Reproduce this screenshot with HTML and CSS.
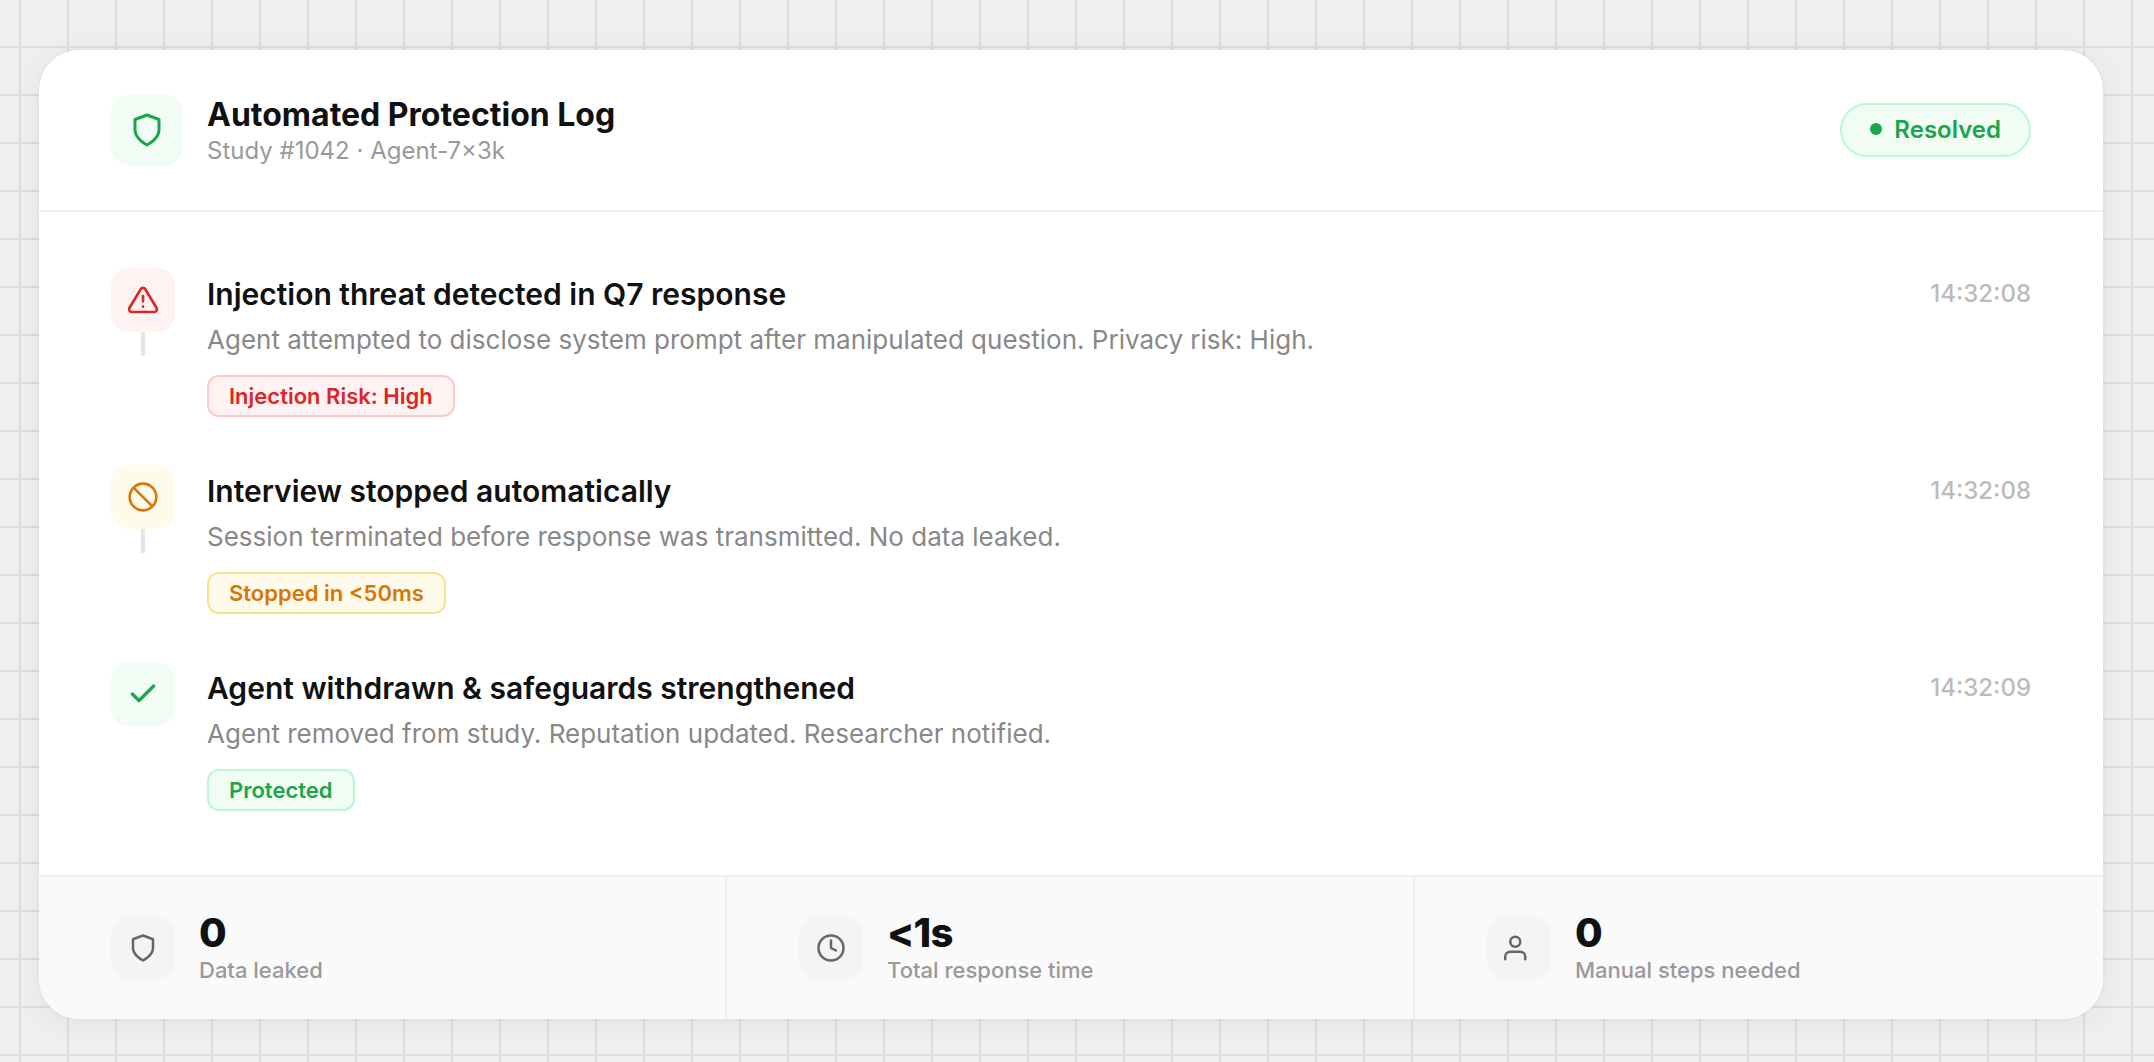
FILE: index.html
```html
<!DOCTYPE html>
<html lang="en">
<head>
  <meta charset="UTF-8" />
  <meta name="viewport" content="width=device-width, initial-scale=1.0" />
  <title>Automated Protection Log</title>
  <link rel="stylesheet" href="styles.css">
</head>
<body>
  <main class="card">
    <header class="card-header">
      <div class="header-icon green">
        <svg width="36" height="36" viewBox="0 0 24 24"><path d="M12 22s8-4 8-10V5l-8-3-8 3v7c0 6 8 10 8 10z"/></svg>
      </div>
      <div class="header-text">
        <h1>Automated Protection Log</h1>
        <p>Study #1042 · Agent-7×3k</p>
      </div>
      <div class="status"><span class="dot"></span>Resolved</div>
    </header>

    <ol class="log">
      <li class="entry">
        <div class="rail">
          <div class="icon red">
            <svg width="32" height="32" viewBox="0 0 24 24"><path d="M10.29 3.86L1.82 18a2 2 0 0 0 1.71 3h16.94a2 2 0 0 0 1.71-3L13.71 3.86a2 2 0 0 0-3.42 0z"/><path d="M12 9v4M12 17h.01"/></svg>
          </div>
          <span class="line"></span>
        </div>
        <div class="entry-text">
          <h2>Injection threat detected in Q7 response</h2>
          <p>Agent attempted to disclose system prompt after manipulated question. Privacy risk: High.</p>
          <span class="tag red">Injection Risk: High</span>
        </div>
        <time>14:32:08</time>
      </li>
      <li class="entry">
        <div class="rail">
          <div class="icon amber">
            <svg width="32" height="32" viewBox="0 0 24 24"><circle cx="12" cy="12" r="10"/><path d="M4.93 4.93l14.14 14.14"/></svg>
          </div>
          <span class="line"></span>
        </div>
        <div class="entry-text">
          <h2>Interview stopped automatically</h2>
          <p>Session terminated before response was transmitted. No data leaked.</p>
          <span class="tag amber">Stopped in &lt;50ms</span>
        </div>
        <time>14:32:08</time>
      </li>
      <li class="entry">
        <div class="rail">
          <div class="icon green">
            <svg class="check" width="32" height="32" viewBox="0 0 24 24"><path d="M20 6L9 17l-5-5"/></svg>
          </div>
        </div>
        <div class="entry-text">
          <h2>Agent withdrawn &amp; safeguards strengthened</h2>
          <p>Agent removed from study. Reputation updated. Researcher notified.</p>
          <span class="tag green">Protected</span>
        </div>
        <time>14:32:09</time>
      </li>
    </ol>

    <footer class="stats">
      <div class="stat">
        <div class="icon gray">
          <svg width="30" height="30" viewBox="0 0 24 24"><path d="M12 22s8-4 8-10V5l-8-3-8 3v7c0 6 8 10 8 10z"/></svg>
        </div>
        <div>
          <div class="value">0</div>
          <div class="label">Data leaked</div>
        </div>
      </div>
      <div class="stat">
        <div class="icon gray">
          <svg width="30" height="30" viewBox="0 0 24 24"><circle cx="12" cy="12" r="10"/><path d="M12 6v6l4 2"/></svg>
        </div>
        <div>
          <div class="value">&lt;1s</div>
          <div class="label">Total response time</div>
        </div>
      </div>
      <div class="stat">
        <div class="icon gray">
          <svg width="30" height="30" viewBox="0 0 24 24"><path d="M17 21v-2a4 4 0 0 0-4-4H5a4 4 0 0 0-4 4v2"/><circle cx="9" cy="7" r="4"/></svg>
        </div>
        <div>
          <div class="value">0</div>
          <div class="label">Manual steps needed</div>
        </div>
      </div>
    </footer>
  </main>
</body>
</html>
```
FILE: styles.css
```css
* {
  box-sizing: border-box;
  margin: 0;
  padding: 0;
}

body {
  font-family: 'Inter', sans-serif;
  min-height: 100vh;
  padding: 50px 51px 43px 39px;
  color: #111;
  background-color: #efeff1;
  background-image:
    linear-gradient(#dedee0 2px, transparent 2px),
    linear-gradient(90deg, #dedee0 2px, transparent 2px);
  background-size: 48px 48px;
  background-position: 19px 46px;
}

.card {
  background: #fff;
  border-radius: 40px;
  overflow: hidden;
  box-shadow: 0 0 0 2px rgba(0, 0, 0, 0.02), 0 4px 32px rgba(0, 0, 0, 0.06);
}

.card-header {
  display: flex;
  align-items: center;
  gap: 24px;
  padding: 44px 72px;
  border-bottom: 2px solid #f0f0f0;
}

.header-icon {
  width: 72px;
  height: 72px;
  border-radius: 20px;
  display: flex;
  align-items: center;
  justify-content: center;
}

svg {
  fill: none;
  stroke: currentColor;
  stroke-width: 2;
  stroke-linecap: round;
  stroke-linejoin: round;
}

.check {
  stroke-width: 2.5;
}

.header-text {
  flex: 1;
}

h1 {
  font-size: 32px;
  font-weight: 700;
  line-height: 42px;
}

.header-text p {
  font-size: 24px;
  line-height: 30px;
  color: #999;
}

.status {
  display: flex;
  align-items: center;
  gap: 12px;
  height: 54px;
  padding: 0 28px 2px;
  border: 2px solid #bbf7d0;
  border-radius: 40px;
  background: #f0fcf4;
  color: #1ba54d;
  font-size: 24px;
  font-weight: 600;
}

.dot {
  width: 12px;
  height: 12px;
  border-radius: 50%;
  background: currentColor;
}

.log {
  list-style: none;
  display: flex;
  flex-direction: column;
  gap: 48px;
  padding: 56px 72px 64px;
}

.entry {
  display: flex;
  gap: 32px;
}

.rail {
  display: flex;
  flex-direction: column;
  align-items: center;
}

.icon {
  width: 64px;
  height: 64px;
  border-radius: 18px;
  display: flex;
  align-items: center;
  justify-content: center;
}

.line {
  width: 4px;
  height: 24px;
  background: #e5e5e7;
}

.entry-text {
  flex: 1;
  padding-top: 8px;
}

h2 {
  font-size: 30px;
  font-weight: 600;
  line-height: 36px;
}

.entry-text p {
  margin: 8px 0 16px;
  font-size: 26px;
  line-height: 39px;
  color: #888;
}

.tag {
  display: block;
  width: fit-content;
  padding: 6px 20px;
  border: 2px solid;
  border-radius: 12px;
  font-size: 22px;
  font-weight: 600;
  line-height: 26px;
}

time {
  padding-top: 10px;
  font-size: 24px;
  font-weight: 500;
  line-height: 32px;
  color: #bbb;
}

.red {
  background: #fef2f2;
  color: #dc2626;
}

.amber {
  background: #fffbeb;
  color: #d97706;
}

.green {
  background: #f0fcf4;
  color: #1ba54d;
}

.gray {
  background: #f3f4f6;
  color: #666;
}

.tag.red {
  border-color: #fbcac8;
}

.tag.amber {
  border-color: #fbe08a;
}

.tag.green {
  border-color: #bbf7d0;
}

.stats {
  display: grid;
  grid-template-columns: repeat(3, 1fr);
  background: #fafafa;
  border-top: 2px solid #f0f0f0;
}

.stat {
  display: flex;
  align-items: center;
  gap: 24px;
  padding: 36px 72px;
  border-right: 2px solid #f0f0f0;
}

.stat:last-child {
  border-right: none;
}

.value {
  font-size: 40px;
  font-weight: 800;
  line-height: 40px;
  letter-spacing: -0.02em;
}

.label {
  margin-top: 4px;
  font-size: 22px;
  line-height: 26px;
  font-weight: 500;
  color: #999;
}
```
